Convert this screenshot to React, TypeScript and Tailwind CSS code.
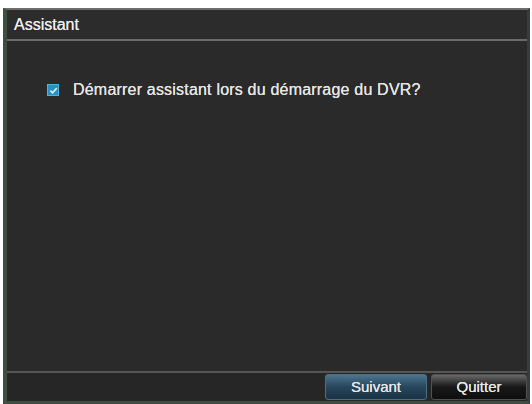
// Écran "Assistant" du DVR — boîte de dialogue sombre avec case à cocher
// et deux boutons en bas (Suivant / Quitter).

import { useState } from 'react'

export default function App() {
  const [checked, setChecked] = useState(true)

  return (
    <div className="w-[532px] h-[404px] bg-white pt-[8px] pl-[3px] pr-[2px] font-['Liberation_Sans',Arial,sans-serif]">
      <div className="h-full flex flex-col bg-[#2a2a2a] border-t-[2px] border-t-[#6e6e6e] border-l-[4px] border-l-[#3f4d42] border-r-[3px] border-r-[#33403a] border-b-[3px] border-b-[#3f4d42]">
        <div className="h-[29px] flex items-center px-[7px] text-[16px] text-[#ececec] bg-[#2c2c2c] [text-shadow:0_0_0.6px_#ffffff]">
          Assistant
        </div>
        <div className="h-[2px] bg-[#6a6a6a]" />

        <div className="flex-1 pt-[37px] pl-[40px]">
          <label className="flex items-center gap-[14px] cursor-pointer">
            <button
              type="button"
              onClick={() => setChecked(!checked)}
              aria-label="Démarrer assistant"
              className="w-[12px] h-[12px] flex items-center justify-center bg-[#2a8fc4] border border-[#4fb3e0]"
            >
              {checked && (
                <svg className="w-[9px] h-[9px]" viewBox="0 0 10 10" fill="none" stroke="#d8eef8" strokeWidth={1.8} aria-hidden="true">
                  <path d="M1.5 5.2 4 7.6 8.6 2.4" />
                </svg>
              )}
            </button>
            <span className="text-[16px] text-[#e4e4e4] tracking-[0.2px] [text-shadow:0_0_0.6px_#ffffff]">
              Démarrer assistant lors du démarrage du DVR?
            </span>
          </label>
        </div>

        <div className="h-[2px] bg-[#555555]" />
        <div className="h-[28px] flex items-stretch justify-end bg-[#262626] pt-[1px] pb-[1px]">
          <button
            type="button"
            className="w-[102px] mr-[4px] rounded-[3px] border border-[#4c6f86] bg-gradient-to-b from-[#4d7590] via-[#27465c] to-[#1c3344] text-[15px] text-[#e6e6e6] [text-shadow:0_0_0.6px_#ffffff]"
          >
            Suivant
          </button>
          <button
            type="button"
            className="w-[96px] rounded-[3px] border border-[#505050] bg-gradient-to-b from-[#6a6a6a] via-[#181818] to-[#0e0e0e] text-[15px] text-[#e6e6e6] [text-shadow:0_0_0.6px_#ffffff]"
          >
            Quitter
          </button>
        </div>
      </div>
    </div>
  )
}
